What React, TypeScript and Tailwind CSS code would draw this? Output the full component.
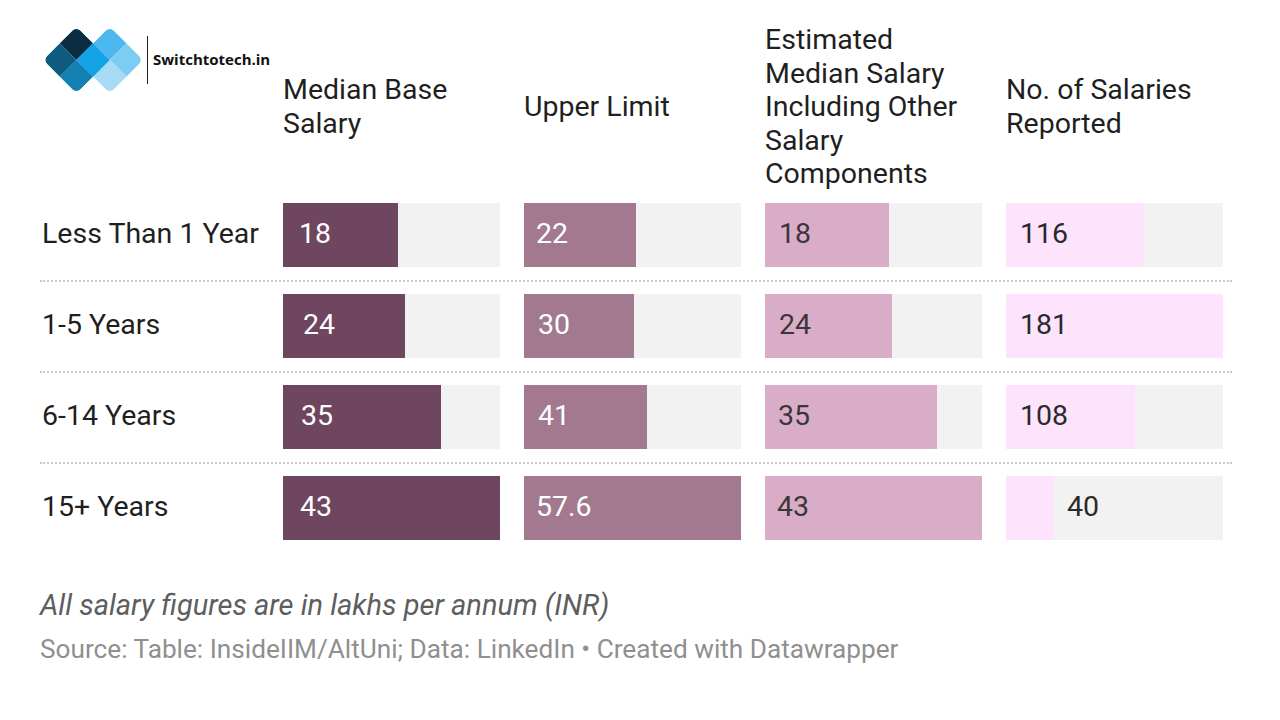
import React from "react";

type Cell = { v: string; w: number; pl: number };
type Row = { label: string; cells: Cell[] };

const rows: Row[] = [
  {
    label: "Less Than 1 Year",
    cells: [
      { v: "18", w: 115, pl: 16 },
      { v: "22", w: 112, pl: 12 },
      { v: "18", w: 124, pl: 14 },
      { v: "116", w: 138, pl: 14 },
    ],
  },
  {
    label: "1-5 Years",
    cells: [
      { v: "24", w: 122, pl: 20 },
      { v: "30", w: 110, pl: 14 },
      { v: "24", w: 127, pl: 14 },
      { v: "181", w: 217, pl: 14 },
    ],
  },
  {
    label: "6-14 Years",
    cells: [
      { v: "35", w: 158, pl: 18 },
      { v: "41", w: 123, pl: 14 },
      { v: "35", w: 172, pl: 13 },
      { v: "108", w: 129, pl: 14 },
    ],
  },
  {
    label: "15+ Years",
    cells: [
      { v: "43", w: 217, pl: 17 },
      { v: "57.6", w: 217, pl: 12 },
      { v: "43", w: 217, pl: 12 },
      { v: "40", w: 48, pl: 61 },
    ],
  },
];

const fills = ["bg-[#6e465f]", "bg-[#a2798f]", "bg-[#d9adc7]", "bg-[#fde3fc]"];
const textColors = ["text-white", "text-white", "text-[#3b363a]", "text-[#2a2a2a]"];

function Logo() {
  const c = 16.7; // half diagonal of a cell
  const side = c * Math.SQRT2;
  const lx = 2 * c + 1;
  const rx = lx + 2 * c;
  const cy = 34;
  const cell = (x: number, y: number, fill: string, key: string) => (
    <rect
      key={key}
      x={x - side / 2}
      y={y - side / 2}
      width={side}
      height={side}
      fill={fill}
      transform={`rotate(45 ${x} ${y})`}
    />
  );
  const big = side * 2;
  return (
    <svg width="102" height="68" viewBox="0 0 102 68" className="shrink-0">
      <defs>
        <clipPath id="lclip">
          <rect x={lx - big / 2} y={cy - big / 2} width={big} height={big} rx="6" transform={`rotate(45 ${lx} ${cy})`} />
        </clipPath>
        <clipPath id="rclip">
          <rect x={rx - big / 2} y={cy - big / 2} width={big} height={big} rx="6" transform={`rotate(45 ${rx} ${cy})`} />
        </clipPath>
      </defs>
      <g clipPath="url(#rclip)">
        {cell(rx, cy - c, "#4db8ee", "rt")}
        {cell(rx + c, cy, "#7dcdf3", "rr")}
        {cell(rx, cy + c, "#a6dbf6", "rb")}
        {cell(rx - c, cy, "#12a4e6", "rl")}
      </g>
      <g clipPath="url(#lclip)">
        {cell(lx, cy - c, "#0a2d42", "lt")}
        {cell(lx - c, cy, "#0f5b80", "ll")}
        {cell(lx, cy + c, "#137fb3", "lb")}
        {cell(lx + c, cy, "#12a4e6", "lr")}
      </g>
    </svg>
  );
}

export default function App() {
  return (
    <div
      className="w-[1280px] h-[720px] bg-white overflow-hidden pl-10 pt-[23px]"
      style={{ fontFamily: "Roboto, 'Liberation Sans', sans-serif" }}
    >
      <div className="w-[1192px]">
        {/* header */}
        <div className="grid grid-cols-[219px_217px_217px_217px_217px] gap-x-6 items-center text-[28.5px] leading-[33.5px] text-[#1f1f1f]">
          <div className="self-start flex items-center pt-[3px] pl-[2px] whitespace-nowrap">
            <Logo />
            <div className="shrink-0 ml-[3px] w-px h-[48px] bg-[#222]" />
            <span
              className="shrink-0 ml-[5px] text-[15px] font-bold text-[#111]"
              style={{ fontFamily: "'Open Sans', sans-serif" }}
            >
              Switchtotech.in
            </span>
          </div>
          <div>
            Median Base
            <br />
            Salary
          </div>
          <div>Upper Limit</div>
          <div>
            Estimated
            <br />
            Median Salary
            <br />
            Including Other
            <br />
            Salary
            <br />
            Components
          </div>
          <div>
            No. of Salaries
            <br />
            Reported
          </div>
        </div>

        {/* rows */}
        <div className="mt-3">
          {rows.map((r, ri) => (
            <div
              key={r.label}
              className={`grid grid-cols-[219px_217px_217px_217px_217px] gap-x-6 items-center ${
                ri < rows.length - 1 ? "pb-[13px] border-b-2 border-dotted border-[#c9c9c9] mb-3" : ""
              }`}
            >
              <div className="pl-[2px] text-[28.5px] text-[#1f1f1f] whitespace-nowrap">{r.label}</div>
              {r.cells.map((c, ci) => (
                <div key={ci} className="relative h-16 bg-[#f2f2f2] flex items-center">
                  <div className={`absolute left-0 top-0 bottom-0 ${fills[ci]}`} style={{ width: c.w }} />
                  <span
                    className={`relative text-[28.5px] leading-none ${textColors[ci]}`}
                    style={{ paddingLeft: c.pl }}
                  >
                    {c.v}
                  </span>
                </div>
              ))}
            </div>
          ))}
        </div>

        {/* footer */}
        <div className="mt-[50px] text-[29px] leading-[30px] italic text-[#5e5e5e]">
          All salary figures are in lakhs per annum (INR)
        </div>
        <div className="mt-[14px] text-[26.2px] leading-[30px] text-[#8f8f8f]">
          Source: Table: InsideIIM/AltUni; Data: LinkedIn • Created with Datawrapper
        </div>
      </div>
    </div>
  );
}
